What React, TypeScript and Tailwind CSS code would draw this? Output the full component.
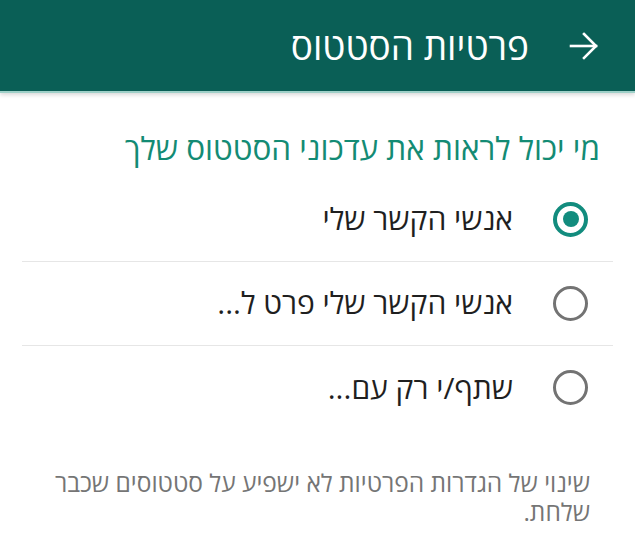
import React from "react";

const font = { fontFamily: '"Open Sans", "Liberation Sans", "DejaVu Sans", sans-serif' };

function Radio({ checked }: { checked: boolean }) {
  return checked ? (
    <div className="w-[35px] h-[35px] rounded-full border-[4px] border-[#128c7e] flex items-center justify-center shrink-0">
      <div className="w-[16px] h-[16px] rounded-full bg-[#128c7e]" />
    </div>
  ) : (
    <div className="w-[35px] h-[35px] rounded-full border-[3px] border-[#737373] shrink-0" />
  );
}

function Row({ label, checked, divider }: { label: string; checked: boolean; divider: boolean }) {
  return (
    <div className={`mx-[22px] h-[84px] flex items-center gap-[40px] pr-[25px] ${divider ? "border-b border-[#e6e6e6]" : ""}`}>
      <Radio checked={checked} />
      <span className="text-[30px] text-[#1f1f1f] leading-none">{label}</span>
    </div>
  );
}

export default function App() {
  return (
    <div dir="rtl" style={font} className="w-[635px] h-[543px] bg-white overflow-hidden">
      <div className="h-[93px] bg-[#0a5f56] flex items-center pr-[36px] gap-[40px] border-b-[2px] border-[#9fd0c8] shadow-[0_2px_4px_rgba(0,0,0,0.15)]">
        <svg width="30" height="28" viewBox="0 0 30 28" fill="none" stroke="white" strokeWidth="2.6" strokeLinecap="square">
          <path d="M2 14 H27" />
          <path d="M15 2 L27 14 L15 26" />
        </svg>
        <span className="text-white text-[37px] leading-none">פרטיות הסטטוס</span>
      </div>
      <div className="pt-[39px] pr-[35px] text-[31.5px] text-[#138b74] leading-none">
        מי יכול לראות את עדכוני הסטטוס שלך
      </div>
      <div className="mt-[14px]">
        <Row label="אנשי הקשר שלי" checked divider />
        <Row label="אנשי הקשר שלי פרט ל..." checked={false} divider />
        <Row label="שתף/י רק עם..." checked={false} divider={false} />
      </div>
      <div className="mt-[38px] pr-[45px] pl-[30px] text-[24.5px] leading-[29px] text-[#757575]">
        שינוי של הגדרות הפרטיות לא ישפיע על סטטוסים שכבר שלחת.
      </div>
    </div>
  );
}
